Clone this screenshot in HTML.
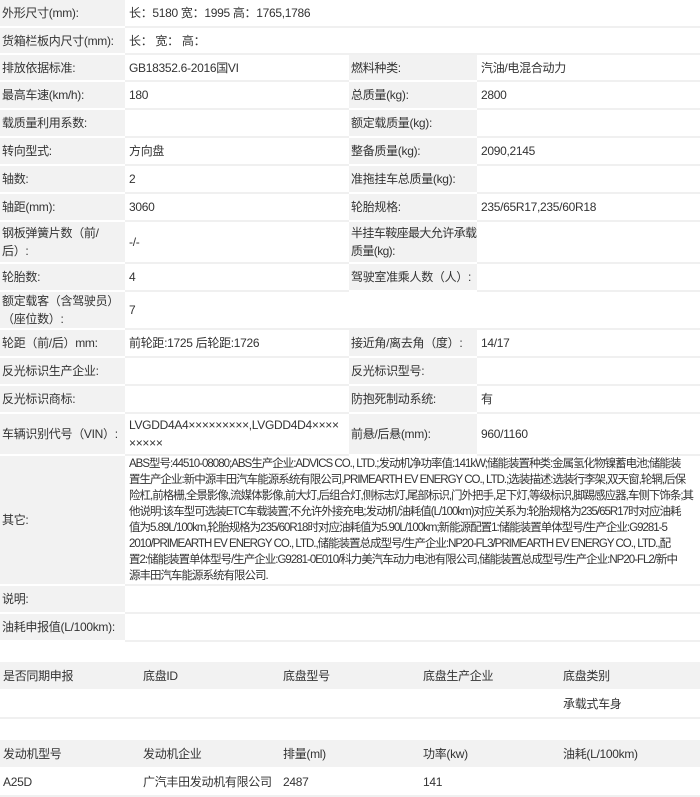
<!DOCTYPE html><html><head><meta charset="utf-8"><style>
body{margin:0;width:700px;height:792px;overflow:hidden;background:#fff;font-family:"Liberation Sans","Noto Sans CJK SC",sans-serif;font-size:12px;color:#333;letter-spacing:-0.3px}
table{border-collapse:collapse;table-layout:fixed;width:700px}
td{padding:0 2px;border-bottom:2px solid #f0f0f0;vertical-align:middle;line-height:18px;word-break:break-all;overflow:hidden}
td.l{background:#f2f2f2;border-bottom:2px solid #fff}
td.n{white-space:nowrap}
td.v{padding-left:4px}
td.o{font-size:11.5px;letter-spacing:-1px;line-height:16px;white-space:nowrap}
.t2 td{border-bottom:2px solid #f0f0f0;padding-left:3px;white-space:nowrap}
.t2 tr.h td{background:#f2f2f2;border-bottom:2px solid #fff}
</style></head><body>
<table>
<colgroup><col style="width:125px"><col style="width:224px"><col style="width:128px"><col style="width:223px"></colgroup>
<tr style="height:27px"><td class="l n">外形尺寸(mm):</td><td class="v" colspan="3">长：5180 宽：1995 高：1765,1786</td></tr>
<tr style="height:27px"><td class="l n">货箱栏板内尺寸(mm):</td><td class="v" colspan="3">长： 宽： 高：</td></tr>
<tr style="height:27px"><td class="l n">排放依据标准:</td><td class="v">GB18352.6-2016国VI</td><td class="l n">燃料种类:</td><td class="v">汽油/电混合动力</td></tr>
<tr style="height:28px"><td class="l n">最高车速(km/h):</td><td class="v">180</td><td class="l n">总质量(kg):</td><td class="v">2800</td></tr>
<tr style="height:28px"><td class="l n">载质量利用系数:</td><td class="v"></td><td class="l n">额定载质量(kg):</td><td class="v"></td></tr>
<tr style="height:28px"><td class="l n">转向型式:</td><td class="v">方向盘</td><td class="l n">整备质量(kg):</td><td class="v">2090,2145</td></tr>
<tr style="height:28px"><td class="l n">轴数:</td><td class="v">2</td><td class="l n">准拖挂车总质量(kg):</td><td class="v"></td></tr>
<tr style="height:28px"><td class="l n">轴距(mm):</td><td class="v">3060</td><td class="l n">轮胎规格:</td><td class="v">235/65R17,235/60R18</td></tr>
<tr style="height:42px"><td class="l n">钢板弹簧片数（前/<br>后）:</td><td class="v">-/-</td><td class="l n" style="letter-spacing:-0.6px">半挂车鞍座最大允许承载<br>质量(kg):</td><td class="v"></td></tr>
<tr style="height:28px"><td class="l n">轮胎数:</td><td class="v">4</td><td class="l n">驾驶室准乘人数（人）:</td><td class="v"></td></tr>
<tr style="height:38px"><td class="l n">额定载客（含驾驶员）<br>（座位数）:</td><td class="v" colspan="3">7</td></tr>
<tr style="height:28px"><td class="l n">轮距（前/后）mm:</td><td class="v">前轮距:1725 后轮距:1726</td><td class="l n">接近角/离去角（度）:</td><td class="v">14/17</td></tr>
<tr style="height:28px"><td class="l n">反光标识生产企业:</td><td class="v"></td><td class="l n">反光标识型号:</td><td class="v"></td></tr>
<tr style="height:28px"><td class="l n">反光标识商标:</td><td class="v"></td><td class="l n">防抱死制动系统:</td><td class="v">有</td></tr>
<tr style="height:42px"><td class="l n">车辆识别代号（VIN）:</td><td class="v n">LVGDD4A4×××××××××,LVGDD4D4××××<br>×××××</td><td class="l n">前悬/后悬(mm):</td><td class="v">960/1160</td></tr>
<tr style="height:130px"><td class="l">其它:</td><td class="v o" colspan="3">ABS型号:44510-08080;ABS生产企业:ADVICS CO., LTD.;发动机净功率值:141kW;储能装置种类:金属氢化物镍蓄电池;储能装<br>置生产企业:新中源丰田汽车能源系统有限公司,PRIMEARTH EV ENERGY CO., LTD.;选装描述:选装行李架,双天窗,轮辋,后保<br>险杠,前格栅,全景影像,流媒体影像,前大灯,后组合灯,侧标志灯,尾部标识,门外把手,足下灯,等级标识,脚踢感应器,车侧下饰条;其<br>他说明:该车型可选装ETC车载装置;不允许外接充电;发动机/油耗值(L/100km)对应关系为:轮胎规格为235/65R17时对应油耗<br>值为5.89L/100km,轮胎规格为235/60R18时对应油耗值为5.90L/100km;新能源配置1:储能装置单体型号/生产企业:G9281-5<br>2010/PRIMEARTH EV ENERGY CO., LTD.,储能装置总成型号/生产企业:NP20-FL3/PRIMEARTH EV ENERGY CO., LTD.,配<br>置2:储能装置单体型号/生产企业:G9281-0E010/科力美汽车动力电池有限公司,储能装置总成型号/生产企业:NP20-FL2/新中<br>源丰田汽车能源系统有限公司.</td></tr>
<tr style="height:28px"><td class="l n">说明:</td><td class="v" colspan="3"></td></tr>
<tr style="height:28px"><td class="l n">油耗申报值(L/100km):</td><td class="v" colspan="3"></td></tr>
</table>
<table class="t2" style="margin-top:20px">
<tr class="h" style="height:28px"><td>是否同期申报</td><td>底盘ID</td><td>底盘型号</td><td>底盘生产企业</td><td>底盘类别</td></tr>
<tr style="height:28px"><td></td><td></td><td></td><td></td><td>承载式车身</td></tr>
</table>
<table class="t2" style="margin-top:21px">
<tr class="h" style="height:28px"><td>发动机型号</td><td>发动机企业</td><td>排量(ml)</td><td>功率(kw)</td><td>油耗(L/100km)</td></tr>
<tr style="height:28px"><td>A25D</td><td>广汽丰田发动机有限公司</td><td>2487</td><td>141</td><td></td></tr>
</table>
</body></html>
